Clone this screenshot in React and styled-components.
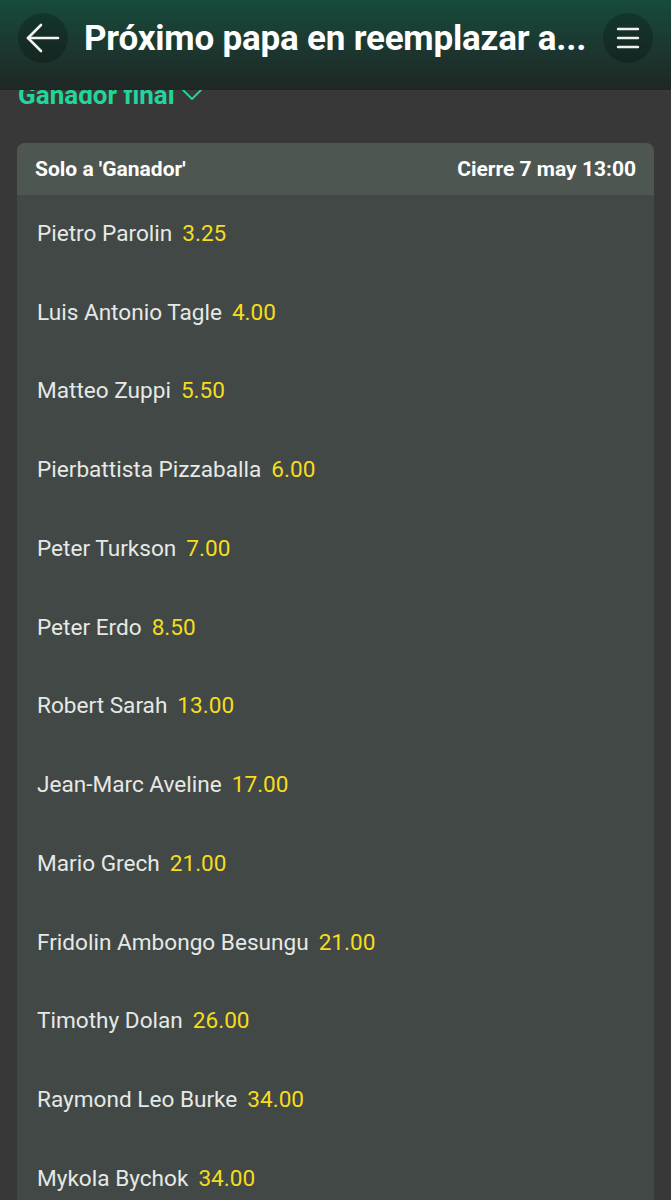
import React from 'react';
import styled, { createGlobalStyle } from 'styled-components';

const GlobalStyle = createGlobalStyle`
  html, body {
    margin: 0;
    padding: 0;
    background: #383838;
    font-family: Roboto, "Liberation Sans", sans-serif;
  }
`;

const Page = styled.div`
  min-height: 1200px;
  background: #383838;
  overflow: hidden;
`;

const TopBar = styled.header`
  position: fixed;
  top: 0;
  left: 0;
  right: 0;
  height: 90px;
  z-index: 10;
  display: flex;
  align-items: center;
  padding: 0 18px 14px 18px;
  box-sizing: border-box;
  gap: 16px;
  background: linear-gradient(180deg, #174b3d 0%, #1b3a31 45%, #1f2725 100%);
`;

const RoundButton = styled.button`
  flex: none;
  width: 50px;
  height: 50px;
  border-radius: 50%;
  border: none;
  padding: 0;
  display: flex;
  align-items: center;
  justify-content: center;
  background: rgba(0, 0, 0, 0.22);
  color: #f2f2f2;
`;

const Title = styled.h1`
  flex: 1;
  margin: 0;
  color: #ffffff;
  font-size: 35px;
  font-weight: 700;
  white-space: nowrap;
  overflow: hidden;
  letter-spacing: -0.2px;
`;

const Content = styled.main`
  padding: 80px 17px 0 17px;
`;

const MarketLink = styled.div`
  display: flex;
  align-items: center;
  gap: 7px;
  padding-left: 1px;
  color: #21d69b;
  font-size: 26px;
  line-height: 30px;
  font-weight: 700;
  margin-bottom: 33px;
`;

const Card = styled.section`
  border-radius: 8px;
  overflow: hidden;
  background: #414845;
`;

const CardHeader = styled.div`
  height: 52px;
  display: flex;
  align-items: center;
  justify-content: space-between;
  padding: 0 18px;
  background: #4e5652;
  color: #ffffff;
  font-size: 21px;
  font-weight: 700;
`;

const Row = styled.div`
  height: 78.75px;
  display: flex;
  align-items: center;
  gap: 10px;
  padding-left: 20px;
  font-size: 22.6px;
  margin-top: ${(p) => (p.$first ? '-1px' : '0')};
`;

const Name = styled.span`
  color: #e6e8e7;
`;

const Odds = styled.span`
  color: #f6dc1c;
`;

const BackIcon = () => (
  <svg width="36" height="36" viewBox="0 0 36 36" fill="none" stroke="#f4f4f4" strokeWidth="2.6" strokeLinecap="round" strokeLinejoin="round">
    <path d="M33 18H3" />
    <path d="M16 5L3 18L16 31" />
  </svg>
);

const MenuIcon = () => (
  <svg width="24" height="26" viewBox="0 0 24 26" fill="none" stroke="#f0f0f0" strokeWidth="2.4" strokeLinecap="round">
    <path d="M2 4h20" />
    <path d="M2 13h20" />
    <path d="M2 22h20" />
  </svg>
);

const Chevron = () => (
  <svg width="20" height="12" viewBox="0 0 20 12" fill="none" stroke="#21d69b" strokeWidth="1.8" strokeLinecap="round" strokeLinejoin="round">
    <path d="M1 1l9 9l9-9" />
  </svg>
);

const runners = [
  ['Pietro Parolin', '3.25'],
  ['Luis Antonio Tagle', '4.00'],
  ['Matteo Zuppi', '5.50'],
  ['Pierbattista Pizzaballa', '6.00'],
  ['Peter Turkson', '7.00'],
  ['Peter Erdo', '8.50'],
  ['Robert Sarah', '13.00'],
  ['Jean-Marc Aveline', '17.00'],
  ['Mario Grech', '21.00'],
  ['Fridolin Ambongo Besungu', '21.00'],
  ['Timothy Dolan', '26.00'],
  ['Raymond Leo Burke', '34.00'],
  ['Mykola Bychok', '34.00'],
];

export default function App() {
  return (
    <Page>
      <GlobalStyle />
      <TopBar>
        <RoundButton aria-label="Volver">
          <BackIcon />
        </RoundButton>
        <Title>Próximo papa en reemplazar a...</Title>
        <RoundButton aria-label="Menú">
          <MenuIcon />
        </RoundButton>
      </TopBar>
      <Content>
        <MarketLink>
          Ganador final
          <Chevron />
        </MarketLink>
        <Card>
          <CardHeader>
            <span>Solo a 'Ganador'</span>
            <span>Cierre 7 may 13:00</span>
          </CardHeader>
          {runners.map(([name, odds], i) => (
            <Row key={name} $first={i === 0}>
              <Name>{name}</Name>
              <Odds>{odds}</Odds>
            </Row>
          ))}
        </Card>
      </Content>
    </Page>
  );
}
